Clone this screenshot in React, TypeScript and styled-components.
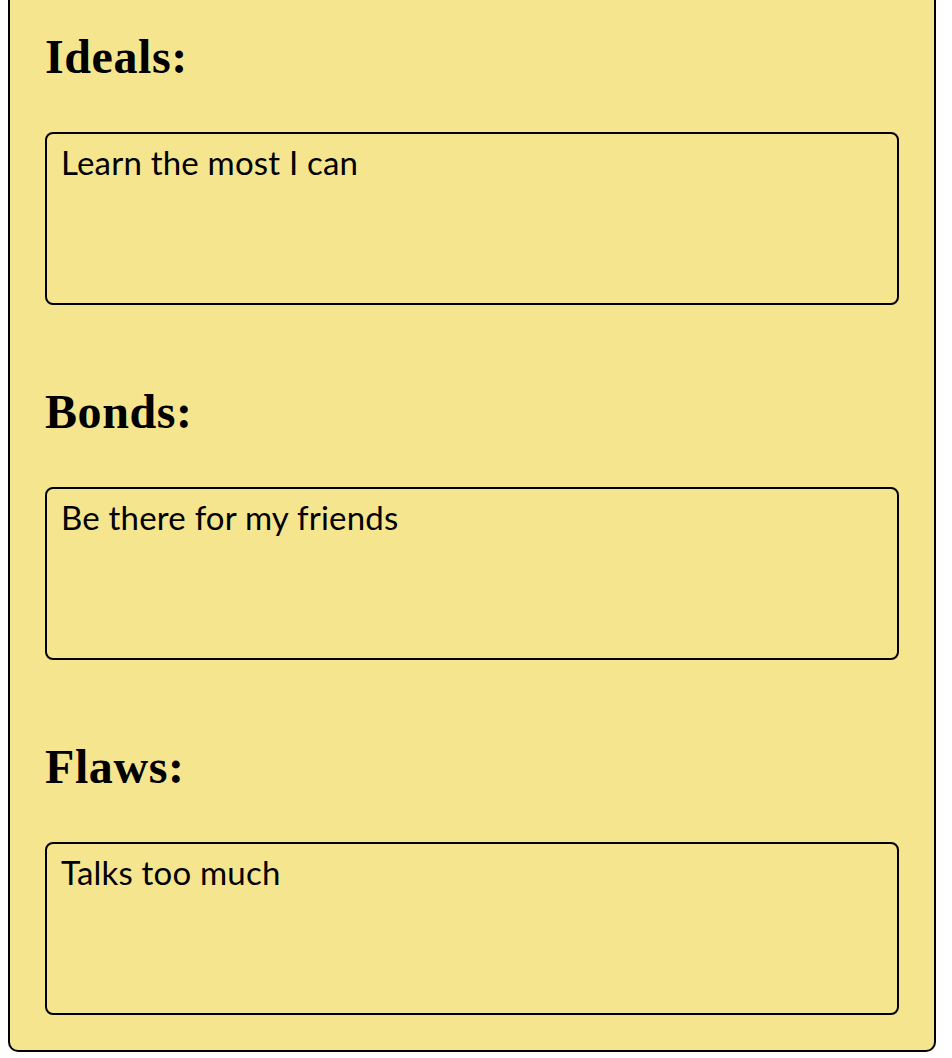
import React from "react";
import styled, { createGlobalStyle } from "styled-components";

const GlobalStyle = createGlobalStyle`
  html, body {
    margin: 0;
    padding: 0;
    background: #ffffff;
  }
  body {
    font-family: "Lato", "Liberation Sans", sans-serif;
  }
`;

const Page = styled.div`
  padding: 0 16px 6px 8px;
`;

const Card = styled.section`
  box-sizing: border-box;
  width: 928px;
  background: #f6e58f;
  border: 2px solid #000;
  border-top: none;
  border-radius: 0 0 10px 10px;
  padding: 34px 35px 35px;
  display: flex;
  flex-direction: column;
  gap: 84px;
`;

const Field = styled.div`
  display: flex;
  flex-direction: column;
  gap: 52px;
`;

const Heading = styled.h2`
  margin: 0;
  font-family: "Liberation Serif", "Times New Roman", serif;
  font-weight: 700;
  font-size: 48px;
  line-height: 46px;
  letter-spacing: 0.6px;
  color: #000;
`;

const Box = styled.textarea`
  box-sizing: border-box;
  display: block;
  width: 100%;
  height: 173px;
  margin: 0;
  padding: 9px 14px;
  border: 2px solid #000;
  border-radius: 8px;
  background: transparent;
  color: #000;
  font-family: "Lato", "Liberation Sans", sans-serif;
  font-size: 33px;
  line-height: 1.2;
  letter-spacing: 0.2px;
  resize: none;
  outline: none;
`;

const fields = [
  { label: "Ideals:", value: "Learn the most I can" },
  { label: "Bonds:", value: "Be there for my friends" },
  { label: "Flaws:", value: "Talks too much" },
];

export default function App() {
  return (
    <>
      <GlobalStyle />
      <Page>
        <Card>
          {fields.map((f) => (
            <Field key={f.label}>
              <Heading>{f.label}</Heading>
              <Box defaultValue={f.value} spellCheck={false} />
            </Field>
          ))}
        </Card>
      </Page>
    </>
  );
}
